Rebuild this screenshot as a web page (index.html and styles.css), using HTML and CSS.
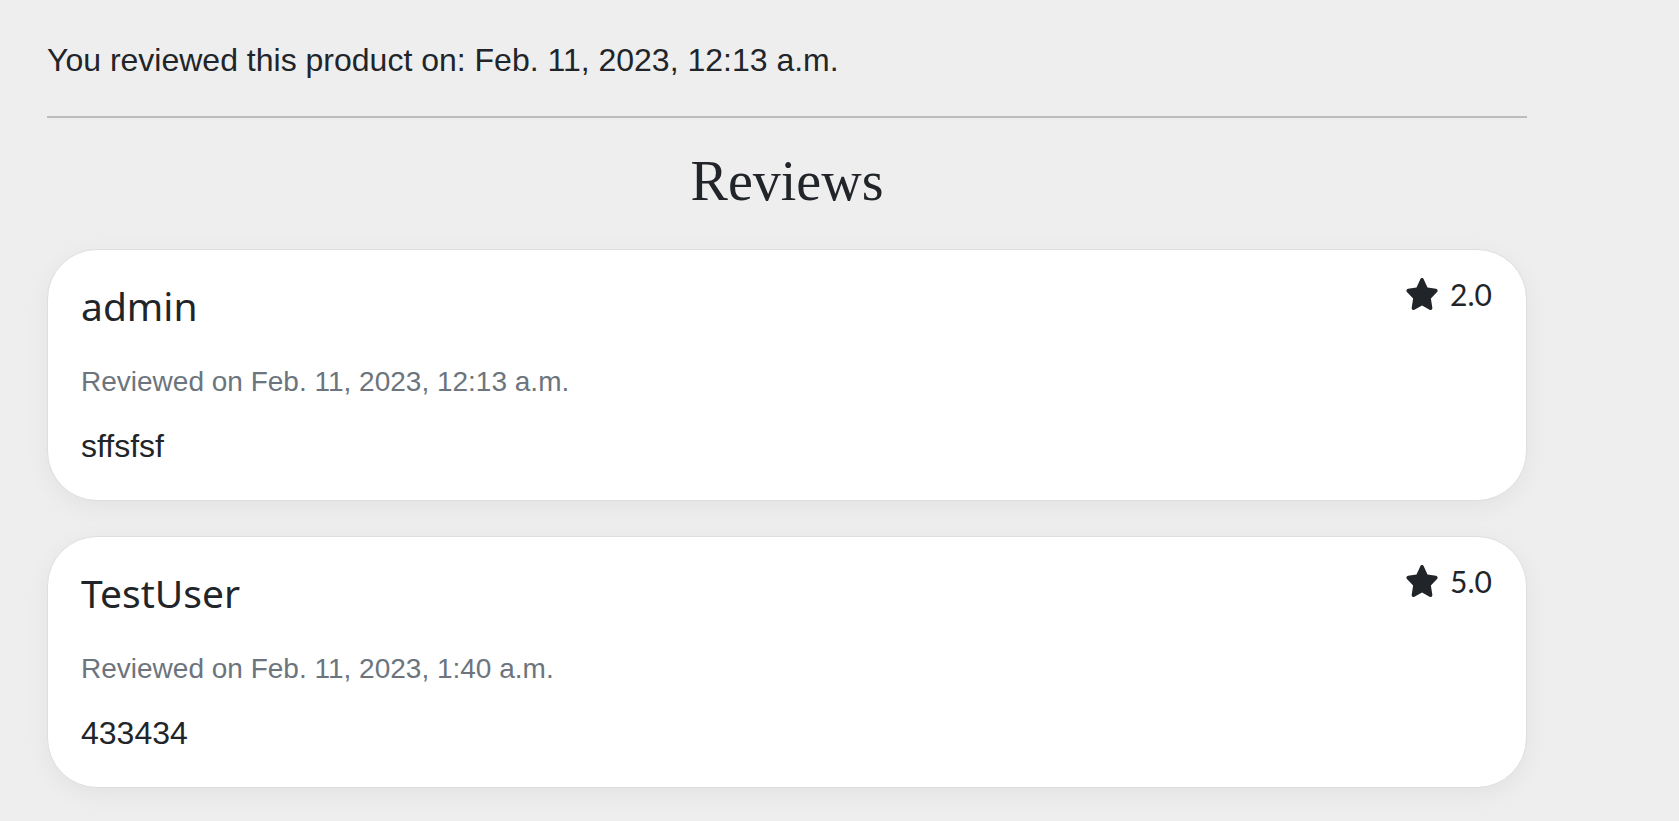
FILE: index.html
```html
<!DOCTYPE html>
<html lang="en">
<head>
<meta charset="utf-8">
<title>Reviews</title>
<link rel="stylesheet" href="styles.css">
</head>
<body>
<main class="wrap">
  <p class="reviewed-note">You reviewed this product on: Feb. 11, 2023, 12:13 a.m.</p>
  <hr class="rule">
  <h2 class="section-title">Reviews</h2>

  <article class="review-card">
    <div class="review-head">
      <h3 class="review-user">admin</h3>
      <div class="review-rating">
        <svg class="star" viewBox="0 0 576 512" preserveAspectRatio="none" aria-hidden="true"><path d="M316.9 18C311.6 7 300.4 0 288.1 0s-23.4 7-28.8 18L195 150.3 51.4 171.5c-12 1.8-22 10.2-25.7 21.7s-.7 24.2 7.9 32.7L137.8 329 113.2 474.7c-2 12 3 24.2 12.9 31.3s23 8 33.8 2.3l128.3-68.5 128.3 68.5c10.8 5.7 23.9 4.9 33.8-2.3s14.9-19.3 12.9-31.3L438.5 329 542.7 225.9c8.6-8.5 11.7-21.2 7.9-32.7s-13.7-19.9-25.7-21.7L381.2 150.3 316.9 18z"/></svg>
        <span>2.0</span>
      </div>
    </div>
    <p class="review-date">Reviewed on Feb. 11, 2023, 12:13 a.m.</p>
    <p class="review-body">sffsfsf</p>
  </article>

  <article class="review-card">
    <div class="review-head">
      <h3 class="review-user">TestUser</h3>
      <div class="review-rating">
        <svg class="star" viewBox="0 0 576 512" preserveAspectRatio="none" aria-hidden="true"><path d="M316.9 18C311.6 7 300.4 0 288.1 0s-23.4 7-28.8 18L195 150.3 51.4 171.5c-12 1.8-22 10.2-25.7 21.7s-.7 24.2 7.9 32.7L137.8 329 113.2 474.7c-2 12 3 24.2 12.9 31.3s23 8 33.8 2.3l128.3-68.5 128.3 68.5c10.8 5.7 23.9 4.9 33.8-2.3s14.9-19.3 12.9-31.3L438.5 329 542.7 225.9c8.6-8.5 11.7-21.2 7.9-32.7s-13.7-19.9-25.7-21.7L381.2 150.3 316.9 18z"/></svg>
        <span>5.0</span>
      </div>
    </div>
    <p class="review-date">Reviewed on Feb. 11, 2023, 1:40 a.m.</p>
    <p class="review-body">433434</p>
  </article>

  <hr class="rule rule-bottom">
</main>
</body>
</html>
```

FILE: styles.css
```css
html, body {
  margin: 0;
  padding: 0;
  background: #eeeeee;
  color: #212529;
  font-family: "Liberation Sans", Arial, sans-serif;
}

.wrap {
  width: 1480px;
  margin-left: 47px;
  padding-top: 36px;
}

.reviewed-note {
  margin: 0;
  font-size: 32px;
  line-height: 1.5;
}

.rule {
  border: 0;
  height: 2px;
  background: #bcbcbc;
  margin: 32px 0 30px;
}

.section-title {
  margin: 0 0 34px;
  text-align: center;
  font-family: "Liberation Serif", "Times New Roman", serif;
  font-weight: 400;
  font-size: 56px;
  line-height: 1.2;
}

.review-card {
  background: #ffffff;
  border: 1px solid #dedede;
  border-radius: 50px;
  padding: 32px 32px 30px 33px;
  margin-bottom: 35px;
  box-shadow: 0 6px 24px rgba(0, 0, 0, 0.05);
}

.review-head {
  display: flex;
  justify-content: space-between;
  align-items: flex-start;
}

.review-user {
  margin: 0;
  font-family: "Noto Sans", Lato, sans-serif;
  font-weight: 400;
  font-size: 39px;
  line-height: 48px;
}

.review-rating {
  display: flex;
  align-items: center;
  gap: 11px;
  margin-top: -6px;
  margin-right: 2px;
  font-family: Lato, "Noto Sans", sans-serif;
  font-size: 30px;
  line-height: 36px;
}

.star {
  width: 34px;
  height: 32px;
  fill: #212529;
  display: block;
}

.review-date {
  margin: 31px 0 0;
  color: #6c757d;
  font-size: 28px;
  line-height: 1.5;
}

.review-body {
  margin: 19px 0 0;
  font-size: 32px;
  line-height: 1.5;
}

.rule-bottom {
  margin-top: -1px;
}
```
